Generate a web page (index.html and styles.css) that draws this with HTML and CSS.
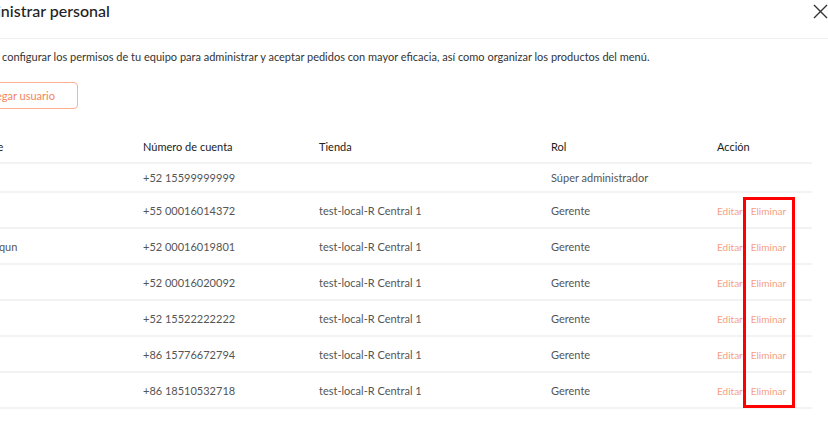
FILE: index.html
```html
<!DOCTYPE html>
<html lang="es">
<head>
    <meta charset="UTF-8">
    <meta name="viewport" content="width=device-width, initial-scale=1.0">
    <title>Administrar personal</title>
    <link rel="stylesheet" href="styles.css">
</head>
<body>
    <div class="staff-modal">
        <div class="modal-header">
            <h2 class="modal-title">Administrar personal</h2>
            <button class="close-btn" aria-label="Cerrar">
                <svg width="15" height="15" viewBox="0 0 15 15">
                    <path d="M1 1 L14 14 M14 1 L1 14" stroke="#333" stroke-width="1.4" fill="none"/>
                </svg>
            </button>
        </div>

        <p class="modal-desc">Puedes configurar los permisos de tu equipo para administrar y aceptar pedidos con mayor eficacia, así como organizar los productos del menú.</p>

        <button class="add-btn">Agregar usuario</button>

        <div class="table-wrap">
            <table class="staff-table">
                <thead>
                    <tr>
                        <th class="col-name">Nombre</th>
                        <th class="col-phone">Número de cuenta</th>
                        <th class="col-store">Tienda</th>
                        <th class="col-role">Rol</th>
                        <th class="col-action">Acción</th>
                    </tr>
                </thead>
                <tbody>
                    <tr class="owner-row">
                        <td>Admin</td>
                        <td>+52 15599999999</td>
                        <td></td>
                        <td>Súper administrador</td>
                        <td></td>
                    </tr>
                    <tr>
                        <td>Ana</td>
                        <td>+55 00016014372</td>
                        <td>test-local-R Central 1</td>
                        <td>Gerente</td>
                        <td><a class="link">Editar</a><a class="link">Eliminar</a></td>
                    </tr>
                    <tr>
                        <td>liangboqun</td>
                        <td>+52 00016019801</td>
                        <td>test-local-R Central 1</td>
                        <td>Gerente</td>
                        <td><a class="link">Editar</a><a class="link">Eliminar</a></td>
                    </tr>
                    <tr>
                        <td>Luis</td>
                        <td>+52 00016020092</td>
                        <td>test-local-R Central 1</td>
                        <td>Gerente</td>
                        <td><a class="link">Editar</a><a class="link">Eliminar</a></td>
                    </tr>
                    <tr>
                        <td>Rosa</td>
                        <td>+52 15522222222</td>
                        <td>test-local-R Central 1</td>
                        <td>Gerente</td>
                        <td><a class="link">Editar</a><a class="link">Eliminar</a></td>
                    </tr>
                    <tr>
                        <td>Wei</td>
                        <td>+86 15776672794</td>
                        <td>test-local-R Central 1</td>
                        <td>Gerente</td>
                        <td><a class="link">Editar</a><a class="link">Eliminar</a></td>
                    </tr>
                    <tr>
                        <td>Chen</td>
                        <td>+86 18510532718</td>
                        <td>test-local-R Central 1</td>
                        <td>Gerente</td>
                        <td><a class="link">Editar</a><a class="link">Eliminar</a></td>
                    </tr>
                </tbody>
            </table>
            <div class="highlight-box"></div>
        </div>
    </div>
</body>
</html>
```

FILE: styles.css
```css
body {
    margin: 0;
    background-color: #fff;
    font-family: Lato, 'Open Sans', sans-serif;
    color: #333;
    overflow: hidden;
}

.staff-modal {
    margin-left: -36px;
    width: 864px;
}

.modal-header {
    display: flex;
    justify-content: space-between;
    align-items: flex-start;
    height: 38px;
    border-bottom: 1px solid #eeeeee;
}

.modal-title {
    margin: 0;
    font-size: 16px;
    font-weight: 500;
    line-height: 22px;
    color: #222;
}

.close-btn {
    background: none;
    border: none;
    padding: 0;
    margin: 4px 0 0 0;
    width: 15px;
    height: 15px;
    cursor: pointer;
}

.modal-desc {
    margin: 10px 0 0 0;
    font-size: 11px;
    line-height: 15px;
    color: #333;
}

.add-btn {
    display: block;
    margin-top: 18px;
    height: 27px;
    width: 114px;
    padding: 0 12px 0 14px;
    text-align: left;
    background-color: #fff;
    border: 1px solid #ffb091;
    border-radius: 4px;
    color: #f5845a;
    font-family: inherit;
    font-size: 11px;
    cursor: pointer;
}

.table-wrap {
    position: relative;
    margin-top: 21px;
    width: 848px;
}

.staff-table {
    width: 100%;
    border-collapse: collapse;
    table-layout: fixed;
    font-size: 11px;
}

.staff-table th {
    text-align: left;
    font-weight: 400;
    color: #222;
    height: 32px;
    padding: 0;
    border-bottom: 2px solid #f3f3f5;
}

.staff-table td {
    height: 34px;
    padding: 0;
    color: #555;
    border-bottom: 2px solid #f3f3f5;
}

.staff-table .owner-row td {
    height: 27px;
}

.col-name { width: 179px; }
.col-phone { width: 176px; }
.col-store { width: 232px; }
.col-role { width: 166px; }
.col-action { width: 95px; }

.link {
    font-size: 10px;
    color: #f6a083;
    cursor: pointer;
}

.link + .link {
    margin-left: 8px;
}

/* red outline drawn over the delete column */
.highlight-box {
    position: absolute;
    left: 779px;
    top: 67px;
    width: 46px;
    height: 205px;
    border: 3px solid #ff0000;
}
```
